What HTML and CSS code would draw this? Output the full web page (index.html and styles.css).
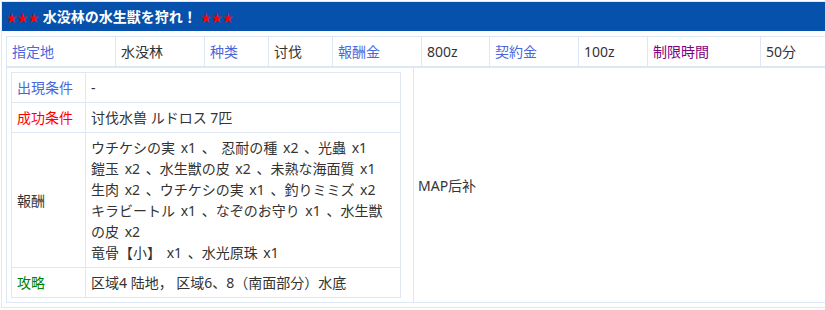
FILE: index.html
```
<!DOCTYPE html>
<html lang="ja">
<head>
  <meta charset="UTF-8">
  <meta name="viewport" content="width=device-width, initial-scale=1.0">
  <title>水没林の水生獣を狩れ！</title>
  <link rel="stylesheet" href="styles.css">
</head>
<body>

  <div class="quest">
    <div class="quest-title">
      <span class="stars">★★★</span> 水没林の水生獣を狩れ！ <span class="stars">★★★</span>
    </div>

    <div class="quest-body">
      <table class="summary">
        <colgroup>
          <col class="w-109"><col class="w-89"><col class="w-64"><col class="w-64"><col class="w-89">
          <col class="w-68"><col class="w-89"><col class="w-69"><col class="w-113"><col class="w-80">
        </colgroup>
        <tr>
          <td class="label">指定地</td>
          <td>水没林</td>
          <td class="label">种类</td>
          <td>讨伐</td>
          <td class="label">報酬金</td>
          <td>800z</td>
          <td class="label">契約金</td>
          <td>100z</td>
          <td class="label time">制限時間</td>
          <td>50分</td>
        </tr>
      </table>

      <table class="detail">
        <tr>
          <td class="cond-cell">
            <table class="cond">
              <tr>
                <td class="cond-name appear">出現条件</td>
                <td>-</td>
              </tr>
              <tr>
                <td class="cond-name success">成功条件</td>
                <td>讨伐水兽 ルドロス 7匹</td>
              </tr>
              <tr>
                <td class="cond-name">報酬</td>
                <td class="rewards">
                  ウチケシの実 x1 、 忍耐の種 x2 、光蟲 x1<br>
                  鎧玉 x2 、水生獣の皮 x2 、未熟な海面質 x1<br>
                  生肉 x2 、ウチケシの実 x1 、釣りミミズ x2<br>
                  キラビートル x1 、なぞのお守り x1 、水生獣の皮 x2<br>
                  竜骨【小】 x1 、水光原珠 x1
                </td>
              </tr>
              <tr>
                <td class="cond-name strategy">攻略</td>
                <td>区域4 陆地， 区域6、8（南面部分）水底</td>
              </tr>
            </table>
          </td>
          <td class="map">MAP后补</td>
        </tr>
      </table>
    </div>
  </div>

</body>
</html>
```

FILE: styles.css
```
* {
  box-sizing: border-box;
}

body {
  margin: 0;
  overflow: hidden;
  background: #fff;
  font-family: "Noto Sans", "Noto Sans CJK SC", "Noto Sans CJK JP", sans-serif;
  font-size: 14px;
  color: #333;
}

.quest {
  width: 860px;
  margin: 1px 0 0 1px;
  border: 1px solid #dde8f4;
}

.quest-title {
  height: 29px;
  line-height: 29px;
  padding-left: 4px;
  background: #0551ab;
  color: #fff;
  font-weight: bold;
  font-size: 14px;
}

.stars {
  color: #ff0000;
  font-family: "Noto Sans CJK SC", sans-serif;
  font-weight: normal;
  font-size: 11px;
}

.quest-body {
  padding: 5px 4px 4px;
}

table {
  border-collapse: collapse;
}

td {
  border: 1px solid #dde8f4;
  padding: 4px 5px;
  line-height: 21px;
  vertical-align: middle;
}

/* top info row */
.summary {
  table-layout: fixed;
  width: 845px;
}

.w-109 { width: 109px; }
.w-89 { width: 89px; }
.w-64 { width: 64px; }
.w-68 { width: 68px; }
.w-69 { width: 69px; }
.w-113 { width: 113px; }
.w-80 { width: 91px; }

.label {
  color: #4a67dc;
}

.label.time {
  color: #800080;
}

/* conditions + map */
.detail {
  width: 845px;
}

.detail > tbody > tr > td.cond-cell {
  width: 407px;
  padding: 4px;
}

.cond {
  width: 390px;
}

.cond td {
  padding: 4px 5px;
}

.cond-name {
  width: 74px;
}

.cond-name.appear {
  color: #4a67dc;
}

.cond-name.success {
  color: #ff0000;
}

.cond-name.strategy {
  color: #008000;
}

.rewards {
  word-spacing: 2px;
}

.map {
  padding-left: 4px;
}
```
